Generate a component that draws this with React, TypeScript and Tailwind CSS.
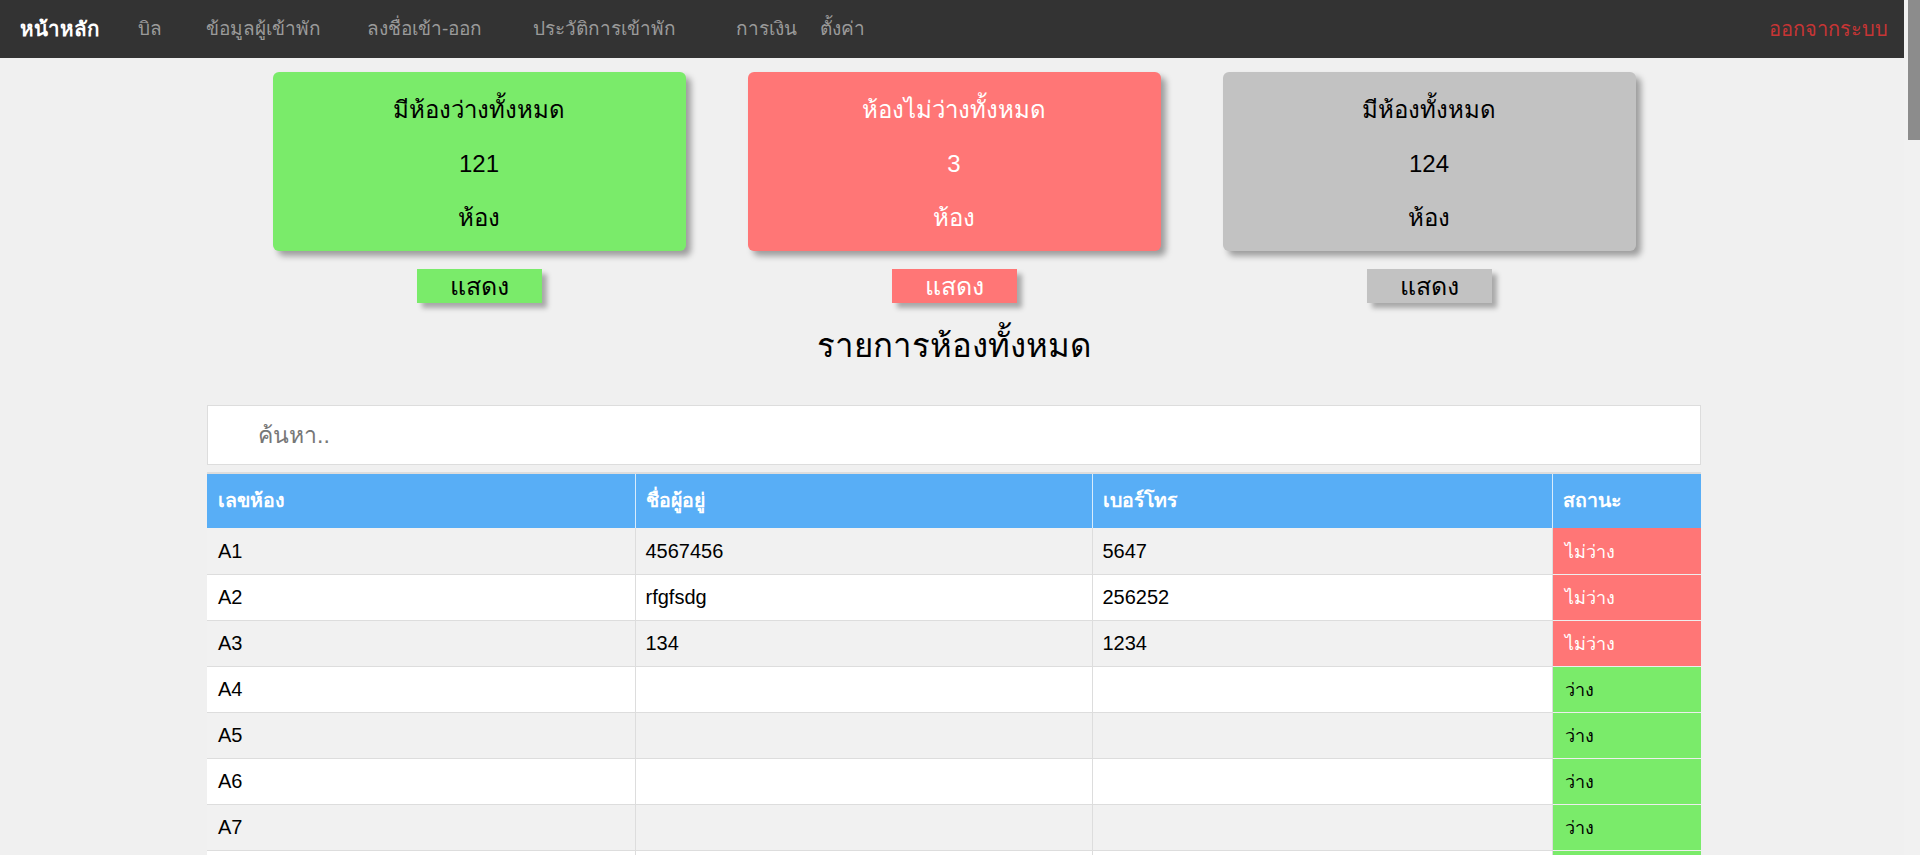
import React from "react";

type Room = { no: string; name: string; phone: string; busy: boolean };

const rooms: Room[] = [
  { no: "A1", name: "4567456", phone: "5647", busy: true },
  { no: "A2", name: "rfgfsdg", phone: "256252", busy: true },
  { no: "A3", name: "134", phone: "1234", busy: true },
  { no: "A4", name: "", phone: "", busy: false },
  { no: "A5", name: "", phone: "", busy: false },
  { no: "A6", name: "", phone: "", busy: false },
  { no: "A7", name: "", phone: "", busy: false },
  { no: "A8", name: "", phone: "", busy: false },
];

const navItems: { label: string; w: string }[] = [
  { label: "บิล", w: "w-[68px]" },
  { label: "ข้อมูลผู้เข้าพัก", w: "w-[161px]" },
  { label: "ลงชื่อเข้า-ออก", w: "w-[166px]" },
  { label: "ประวัติการเข้าพัก", w: "w-[203px]" },
  { label: "การเงิน", w: "w-[84px]" },
  { label: "ตั้งค่า", w: "w-[100px]" },
];

function Card({ title, count, bg, text }: { title: string; count: string; bg: string; text: string }) {
  return (
    <div className="flex flex-col items-center w-[413px]">
      <div className={`w-[413px] h-[179px] rounded-[6px] ${bg} ${text} shadow-[5px_5px_6px_rgba(0,0,0,0.35)] flex flex-col items-center pt-[11px] text-[24px]`}>
        <div className="h-[54px] leading-[54px]">{title}</div>
        <div className="h-[54px] leading-[54px]">{count}</div>
        <div className="h-[54px] leading-[54px]">ห้อง</div>
      </div>
      <button className={`mt-[18px] w-[125px] h-[34px] ${bg} ${text} text-[25px] leading-[34px] shadow-[5px_5px_5px_rgba(0,0,0,0.3)]`}>
        แสดง
      </button>
    </div>
  );
}

export default function App() {
  return (
    <div className="h-[855px] overflow-hidden flex bg-[#f0f0f0] font-['Liberation_Sans',Arial,sans-serif] text-black">
      <div className="flex-1 min-w-0">
        <nav className="h-[58px] bg-[#333333] flex items-center text-[19px]">
          <a className="w-[118px] pl-5 text-white font-bold text-[20.5px] whitespace-nowrap">หน้าหลัก</a>
          {navItems.map((n) => (
            <a key={n.label} className={`${n.w} pl-5 text-[#9a9a9a] whitespace-nowrap`}>
              {n.label}
            </a>
          ))}
          <a className="ml-auto pr-[16px] text-[#c73535] text-[20px]">ออกจากระบบ</a>
        </nav>

        <div className="flex justify-center gap-[62px] mt-[14px] pl-[4px]">
          <Card title="มีห้องว่างทั้งหมด" count="121" bg="bg-[#7aeb6a]" text="text-black" />
          <Card title="ห้องไม่ว่างทั้งหมด" count="3" bg="bg-[#ff7676]" text="text-white" />
          <Card title="มีห้องทั้งหมด" count="124" bg="bg-[#c2c2c2]" text="text-black" />
        </div>

        <h2 className="mt-[25px] mb-[41px] text-center text-[33px] leading-[36px] pl-[4px]">รายการห้องทั้งหมด</h2>

        <div className="w-[1494px] mx-auto relative left-[2px]">
          <input
            className="w-full h-[60px] bg-white border border-[#dddddd] pl-[50px] text-[23px] outline-none placeholder:text-[#777777]"
            placeholder="ค้นหา.."
          />
          <table className="w-full mt-[7px] border-collapse border-t-2 border-[#dddddd] text-[20px]">
            <thead>
              <tr className="bg-[#58aef6] text-white h-[55px] text-left text-[19.5px]">
                <th className="w-[428px] px-[11px] font-bold border-r border-[#d8ecfc]">เลขห้อง</th>
                <th className="w-[457px] px-[10px] font-bold border-r border-[#d8ecfc]">ชื่อผู้อยู่</th>
                <th className="w-[460px] px-[10px] font-bold border-r border-[#d8ecfc]">เบอร์โทร</th>
                <th className="px-[10px] font-bold">สถานะ</th>
              </tr>
            </thead>
            <tbody>
              {rooms.map((r, i) => (
                <tr key={r.no} className={`h-[46px] border-b border-[#dddddd] ${i % 2 === 0 ? "bg-[#f1f1f1]" : "bg-white"}`}>
                  <td className="px-[11px] border-r border-[#dddddd]">{r.no}</td>
                  <td className="px-[10px] border-r border-[#dddddd]">{r.name}</td>
                  <td className="px-[10px] border-r border-[#dddddd]">{r.phone}</td>
                  <td
                    className={`px-[12px] pt-[3px] text-[18px] border-b border-[#eeeeee] ${
                      r.busy ? "bg-[#ff7676] text-white" : "bg-[#7aeb6a] text-black"
                    }`}
                  >
                    {r.busy ? "ไม่ว่าง" : "ว่าง"}
                  </td>
                </tr>
              ))}
            </tbody>
          </table>
        </div>
      </div>
      <div className="w-[16px] shrink-0 bg-[#f1f1f1] pl-[4px]">
        <div className="w-[12px] h-[140px] bg-[#8c8c8c]" />
      </div>
    </div>
  );
}
